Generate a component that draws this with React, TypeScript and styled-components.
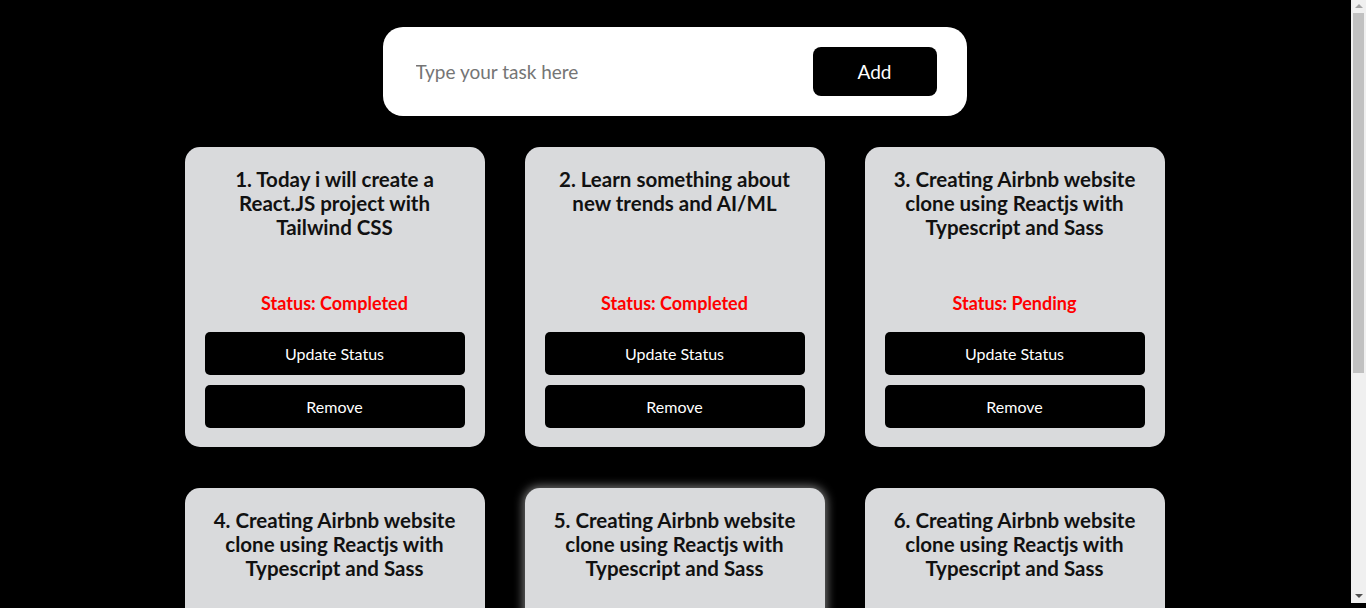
import React, { useState } from 'react';
import styled, { createGlobalStyle } from 'styled-components';

interface Task {
  id: number;
  text: string;
  status: 'Completed' | 'Pending';
}

const initialTasks: Task[] = [
  { id: 1, text: 'Today i will create a React.JS project with Tailwind CSS', status: 'Completed' },
  { id: 2, text: 'Learn something about new trends and AI/ML', status: 'Completed' },
  { id: 3, text: 'Creating Airbnb website clone using Reactjs with Typescript and Sass', status: 'Pending' },
  { id: 4, text: 'Creating Airbnb website clone using Reactjs with Typescript and Sass', status: 'Pending' },
  { id: 5, text: 'Creating Airbnb website clone using Reactjs with Typescript and Sass', status: 'Pending' },
  { id: 6, text: 'Creating Airbnb website clone using Reactjs with Typescript and Sass', status: 'Pending' },
];

const App: React.FC = () => {
  const [tasks, setTasks] = useState<Task[]>(initialTasks);
  const [input, setInput] = useState('');

  const handleAdd = (e: React.FormEvent) => {
    e.preventDefault();
    if (!input.trim()) return;
    setTasks([...tasks, { id: Date.now(), text: input, status: 'Pending' }]);
    setInput('');
  };

  const toggleStatus = (id: number) => {
    setTasks(tasks.map((t) => (t.id === id ? { ...t, status: t.status === 'Completed' ? 'Pending' : 'Completed' } : t)));
  };

  const removeTask = (id: number) => {
    setTasks(tasks.filter((t) => t.id !== id));
  };

  return (
    <>
      <GlobalStyle />
      <Page>
        <Form onSubmit={handleAdd}>
          <Input placeholder='Type your task here' value={input} onChange={(e) => setInput(e.target.value)} />
          <AddButton type='submit'>Add</AddButton>
        </Form>
        <Grid>
          {tasks.map((task, i) => (
            <Card key={task.id} $glow={i === 4}>
              <Title>
                {i + 1}. {task.text}
              </Title>
              <Bottom>
                <Status>Status: {task.status}</Status>
                <ActionButton onClick={() => toggleStatus(task.id)}>Update Status</ActionButton>
                <ActionButton onClick={() => removeTask(task.id)}>Remove</ActionButton>
              </Bottom>
            </Card>
          ))}
        </Grid>
      </Page>
      {/* classic scrollbar as seen in the screenshot */}
      <ScrollTrack>
        <Arrow $up />
        <ScrollThumb />
        <Arrow />
      </ScrollTrack>
    </>
  );
};

const GlobalStyle = createGlobalStyle`
  html, body {
    margin: 0;
    padding: 0;
    background: #000;
  }
  body {
    font-family: 'Lato', 'Open Sans', sans-serif;
  }
`;

const Page = styled.div`
  display: flex;
  flex-direction: column;
  align-items: center;
  padding: 27px 17px 184px 0;
  background: #000;
`;

const Form = styled.form`
  display: flex;
  align-items: center;
  justify-content: space-between;
  box-sizing: border-box;
  width: 584px;
  height: 89px;
  padding: 0 30px 0 33px;
  background: #fff;
  border-radius: 20px;
`;

const Input = styled.input`
  flex: 1;
  border: none;
  outline: none;
  background: transparent;
  font-family: inherit;
  font-size: 19px;
  color: #222;
  padding: 0;
  ::placeholder {
    color: #777;
  }
`;

const AddButton = styled.button`
  width: 124px;
  height: 49px;
  border: none;
  border-radius: 8px;
  background: #000;
  color: #fff;
  font-family: inherit;
  font-size: 19px;
  cursor: pointer;
`;

const Grid = styled.div`
  display: grid;
  grid-template-columns: repeat(3, 300px);
  gap: 41px 40px;
  margin-top: 31px;
`;

const Card = styled.div<{ $glow?: boolean }>`
  display: flex;
  flex-direction: column;
  justify-content: space-between;
  box-sizing: border-box;
  height: 300px;
  padding: 20px 20px 19px;
  background: #d9dadc;
  border-radius: 15px;
  box-shadow: ${(p) => (p.$glow ? '0 0 10px 2px rgba(255, 255, 255, 0.45)' : 'none')};
`;

const Title = styled.h3`
  margin: 0 -4px;
  font-size: 20.5px;
  font-weight: 700;
  line-height: 24px;
  text-align: center;
  color: #111;
`;

const Bottom = styled.div`
  display: flex;
  flex-direction: column;
  gap: 10px;
`;

const Status = styled.p`
  margin: 0 0 8px;
  font-size: 18px;
  line-height: 22px;
  font-weight: 700;
  text-align: center;
  color: #ff0000;
`;

const ActionButton = styled.button`
  height: 43px;
  border: none;
  border-radius: 5px;
  background: #000;
  color: #fff;
  font-family: inherit;
  font-size: 16px;
  cursor: pointer;
`;

const ScrollTrack = styled.div`
  position: fixed;
  top: 0;
  right: 0;
  width: 15px;
  height: 603px;
  display: flex;
  flex-direction: column;
  align-items: center;
  background: #f0f0f0;
`;

const Arrow = styled.div<{ $up?: boolean }>`
  flex: 0 0 auto;
  width: 0;
  height: 0;
  margin: ${(p) => (p.$up ? '4px 0 5px' : 'auto 0 5px')};
  border-left: 4px solid transparent;
  border-right: 4px solid transparent;
  ${(p) => (p.$up ? 'border-bottom: 4px solid #a3a3a3;' : 'border-top: 4px solid #505050;')}
`;

const ScrollThumb = styled.div`
  width: 11px;
  height: 360px;
  background: #c1c1c1;
`;

export default App;
